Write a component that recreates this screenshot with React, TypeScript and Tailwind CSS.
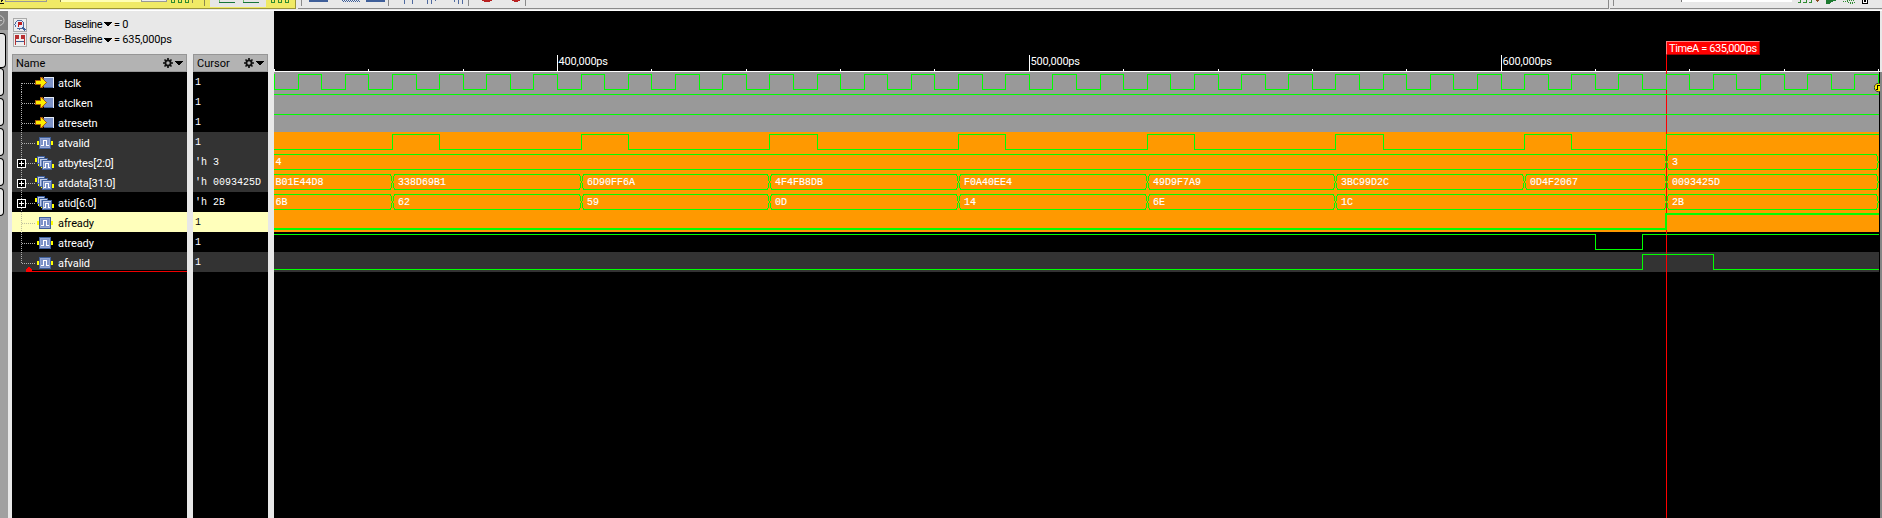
import React from "react";

const START = 274;
const WIDTH = 1605;
const CURSOR_TIME = 635;

/** Pixel column, relative to the wave pane, of a time in ns. */
const px = (t: number) => Math.floor(557.55 + 4.7175 * (t - 400)) - START;

type Kind = "input" | "wire" | "bus";
type BusValue = { from: number; to: number; text: string };
type Signal = {
  name: string;
  value: string;
  kind: Kind;
  row: string;
  wave: string;
  selected?: boolean;
  start?: 0 | 1;
  edges?: number[];
  bus?: BusValue[];
};

const clockEdges = Array.from({ length: 69 }, (_, i) => 340 + i * 5);

const signals: Signal[] = [
  { name: "atclk", value: "1", kind: "input", row: "bg-black", wave: "bg-[#999999]", start: 1, edges: clockEdges },
  { name: "atclken", value: "1", kind: "input", row: "bg-black", wave: "bg-[#999999]", start: 1, edges: [] },
  { name: "atresetn", value: "1", kind: "input", row: "bg-black", wave: "bg-[#999999]", start: 1, edges: [] },
  {
    name: "atvalid", value: "1", kind: "wire", row: "bg-[#333333]", wave: "bg-[#ff9900]", start: 0,
    edges: [365, 375, 405, 415, 445, 455, 485, 495, 525, 535, 565, 575, 605, 615, 635],
  },
  {
    name: "atbytes[2:0]", value: "'h 3", kind: "bus", row: "bg-[#333333]", wave: "bg-[#ff9900]",
    bus: [{ from: 330, to: 635, text: "4" }, { from: 635, to: 680, text: "3" }],
  },
  {
    name: "atdata[31:0]", value: "'h 0093425D", kind: "bus", row: "bg-[#333333]", wave: "bg-[#ff9900]",
    bus: [
      { from: 330, to: 365, text: "B01E44D8" },
      { from: 365, to: 405, text: "338D69B1" },
      { from: 405, to: 445, text: "6D90FF6A" },
      { from: 445, to: 485, text: "4F4FB8DB" },
      { from: 485, to: 525, text: "F0A40EE4" },
      { from: 525, to: 565, text: "49D9F7A9" },
      { from: 565, to: 605, text: "3BC99D2C" },
      { from: 605, to: 635, text: "0D4F2067" },
      { from: 635, to: 680, text: "0093425D" },
    ],
  },
  {
    name: "atid[6:0]", value: "'h 2B", kind: "bus", row: "bg-black", wave: "bg-[#ff9900]",
    bus: [
      { from: 330, to: 365, text: "6B" },
      { from: 365, to: 405, text: "62" },
      { from: 405, to: 445, text: "59" },
      { from: 445, to: 485, text: "0D" },
      { from: 485, to: 525, text: "14" },
      { from: 525, to: 565, text: "6E" },
      { from: 565, to: 635, text: "1C" },
      { from: 635, to: 680, text: "2B" },
    ],
  },
  { name: "afready", value: "1", kind: "wire", row: "bg-[#ffffbb]", wave: "bg-[#ff9900]", selected: true, start: 0, edges: [635] },
  { name: "atready", value: "1", kind: "wire", row: "bg-black", wave: "bg-black", start: 1, edges: [620, 630] },
  { name: "afvalid", value: "1", kind: "wire", row: "bg-[#333333]", wave: "bg-[#333333]", start: 0, edges: [630, 645] },
];

const HIGH = 2.5;
const LOW = 17.5;

function digitalPath(start: 0 | 1, edges: number[]) {
  let level = start;
  let d = `M0 ${level ? HIGH : LOW}`;
  for (const t of edges) {
    const x = px(t) + 0.5;
    level = level ? 0 : 1;
    d += `H${x}V${level ? HIGH : LOW}`;
  }
  return `${d}H${WIDTH}`;
}

function busPath(b: BusValue) {
  const right = px(b.to) + 0.5;
  const open = b.from < 340;
  const left = open ? 0 : px(b.from) + 0.5;
  const l = open ? left : left + 2;
  return (
    `M${l} ${HIGH}H${right - 2}L${right - 1} 5L${right - 0.4} 10L${right - 1} 15L${right - 2} ${LOW}H${l}` +
    (open ? "" : `L${left + 1} 15L${left + 0.4} 10L${left + 1} 5Z`)
  );
}

function Wave({ s }: { s: Signal }) {
  return (
    <div className={`h-5 w-[1605px] ${s.wave}`}>
      <svg width={WIDTH} height="20" className="relative z-10 block" shapeRendering="crispEdges">
        {s.bus ? (
          s.bus.map((b) => (
            <g key={b.from}>
              <path d={busPath(b)} fill="none" stroke="#00ff00" />
              <text
                x={b.from < 340 ? 1.5 : px(b.from) + 6}
                y="13"
                fill="#fff"
                stroke="#fff"
                strokeWidth="0.15"
                className="font-['Liberation_Mono',monospace] text-[10px]"
              >
                {b.text}
              </text>
            </g>
          ))
        ) : (
          <path
            d={digitalPath(s.start ?? 0, s.edges ?? [])}
            transform={s.selected ? "translate(-0.5 -0.5)" : undefined}
            fill="none"
            stroke="#00ff00"
            strokeWidth={s.selected ? 2 : 1}
          />
        )}
      </svg>
    </div>
  );
}

function BlueBox({ x, y, size }: { x: number; y: number; size: number }) {
  return (
    <g>
      <rect x={x} y={y} width={size} height={size} fill="#3f5f9a" />
      <rect x={x + 1} y={y + 1} width={size - 2} height={size - 2} fill="#c3cee9" />
      <rect x={x + 2} y={y + 2} width={size - 3} height={size - 3} fill="#7d93c8" />
    </g>
  );
}

function KindIcon({ kind }: { kind: Kind }) {
  if (kind === "input")
    return (
      <svg width="20" height="14" className="block shrink-0" shapeRendering="crispEdges">
        <rect x="9" y="1" width="10" height="11" fill="#7d93c8" />
        <path d="M9 1.5H18.5V12" fill="none" stroke="#e6ebf7" />
        <path d="M9 11.5H18" stroke="#3f5f9a" />
        <path d="M0.5 4.5H5.5V1.5H7L11.5 6.5L7 11.5H5.5V8.5H0.5Z" fill="#ffee00" stroke="#a85a10" />
      </svg>
    );
  if (kind === "wire")
    return (
      <svg width="20" height="14" className="block shrink-0" shapeRendering="crispEdges">
        <path d="M3 5V9M17 5V9" stroke="#ffff00" strokeWidth="2" />
        <rect x="4" y="1" width="12" height="12" fill="#3f5f9a" />
        <rect x="5.5" y="2.5" width="9" height="9" fill="#7d93c8" stroke="#93a6d4" />
        <path d="M6 9.5H8.5V4.5H11.5V9.5H14" fill="none" stroke="#fff" />
      </svg>
    );
  return (
    <svg width="20" height="14" className="block shrink-0" shapeRendering="crispEdges">
      <path d="M0 2V6M3 5V10M6 8V12M17 8V12" transform="translate(1)" stroke="#ffff00" strokeWidth="2" />
      <BlueBox x={2} y={0} size={8} />
      <BlueBox x={4} y={2} size={9} />
      <BlueBox x={7} y={4} size={10} />
      <path d="M9 11.5H10.5V7.5H13.5V11.5H15" fill="none" stroke="#fff" />
    </svg>
  );
}

function NameRow({ s, first, last }: { s: Signal; first: boolean; last: boolean }) {
  const dots = s.selected ? "#bdbd9c" : "#b0b0b0";
  return (
    <div className={`flex h-5 items-start ${s.row}`}>
      <svg width="23" height="20" className="block shrink-0" shapeRendering="crispEdges">
        <path d={`M9.5 ${first ? 11 : 0}V${last ? 11 : 20}`} stroke={dots} strokeDasharray="1 1" />
        <path d="M10 11.5H23" stroke={dots} strokeDasharray="1 1" />
        {s.kind === "bus" && (
          <g>
            <rect x="5.5" y="7.5" width="8" height="8" fill="#000" stroke="#fff" />
            <path d="M7 11.5H12M9.5 9V14" stroke="#fff" />
          </g>
        )}
      </svg>
      <div className="pt-[4px]">
        <KindIcon kind={s.kind} />
      </div>
      <span
        className={`pt-[3px] pl-[3px] font-[Roboto,sans-serif] text-[11px] leading-[17px] tracking-[-0.1px] whitespace-nowrap ${s.selected ? "text-black" : "text-white"}`}
      >
        {s.name}
      </span>
    </div>
  );
}

function Gear() {
  return (
    <svg width="10" height="10" viewBox="-5 -5 10 10">
      <circle r="2.6" fill="none" stroke="#111" strokeWidth="1.8" />
      <path
        d="M0-5V-3M0 5V3M-5 0H-3M5 0H3M-3.5-3.5L-2-2M3.5 3.5L2 2M-3.5 3.5L-2 2M3.5-3.5L2-2"
        stroke="#111"
        strokeWidth="1.7"
      />
    </svg>
  );
}

function Caret() {
  return (
    <svg width="8" height="5" shapeRendering="crispEdges">
      <path d="M0 0H8L4 4.5Z" fill="#000" />
    </svg>
  );
}

function ColumnHeader({ label }: { label: string }) {
  return (
    <div className="flex h-[18px] items-center border border-[#969696] bg-[#b3b3b3] pr-[3px] pl-[3px]">
      <span className="grow pt-px font-[Roboto,sans-serif] text-[11px] leading-[15px]">{label}</span>
      <Gear />
      <span className="pl-[2px]">
        <Caret />
      </span>
    </div>
  );
}

const greenTeeth = (x: number) =>
  `M${x + 0.5} 0V2.5H${x + 3.5}V0M${x + 7.5} 0V2.5H${x + 10.5}V0M${x + 14.5} 0V2.5H${x + 17.5}V0`;

function Toolbar() {
  return (
    <div className="flex h-[11px] w-full shrink-0 border-b border-white bg-[#e8e8e8]">
      <div className="h-[9px] w-[296px] border-r border-b border-[#9a9438] bg-[#f0ea66]">
        <svg width="295" height="8" className="block" shapeRendering="crispEdges">
          <path d="M0 3.5H4M1 0V2L3 0" stroke="#111" fill="none" />
          <path d="M5 0V1.5H46.5V0" stroke="#999" fill="#f0ea66" />
          <rect x="61" width="80" height="2" fill="#ffffb5" />
          <path d="M60.5 0V2" stroke="#8a8640" />
          <rect x="141" width="26" height="2" fill="#999" />
          <rect x="142" width="24" height="1" fill="#eee" />
          <path d={greenTeeth(171)} stroke="#2f8b30" fill="none" />
          <path d="M192.5 0V2.5M204.5 0V6" stroke="#8c8850" />
          <rect x="210" width="56" height="7" fill="#e6e6e6" />
          <path d="M219 2.5H235M243 2.5H259" stroke="#17743a" />
          <path d="M219.5 0V2M243.5 0V2" stroke="#6fc06f" />
          <path d={greenTeeth(271)} stroke="#2f8b30" fill="none" />
        </svg>
      </div>
      <div className="ml-[2px] h-[9px] w-[1311px] border-r border-b border-[#8a8a8a]">
        <svg width="1310" height="8" className="block" shapeRendering="crispEdges">
          <path d="M3.5 0V5.5M90.5 0V6M170.5 0V6M227.5 0V6" stroke="#8a8a8a" />
          <path d="M11 0H29V1.5H11ZM68 0H86V1.5H68Z" fill="#7d93c8" stroke="#3f5f9a" />
          <path d="M44 0.5H62M45 1.5H62" stroke="#3f5f9a" strokeDasharray="1 1" />
          <path
            d="M106.5 0V4M114.5 0V4M129.5 0V4M133.5 0V4M137.5 0V1M156.5 0V2M160.5 0V4M164.5 0V4"
            stroke="#506a9f"
          />
          <path d="M184 0H194V1H192V2H186V1H184ZM214 0H222V1H220V2H216V1H214Z" fill="#b82020" />
        </svg>
      </div>
      <div className="ml-px h-[9px] grow border-b border-[#8a8a8a]">
        <svg width="272" height="8" className="block" shapeRendering="crispEdges">
          <path d="M3.5 0V5.5" stroke="#8a8a8a" />
          <rect x="72" width="110" height="2" fill="#fff" />
          <path d="M71.5 0V2" stroke="#777" />
          <path d="M187.5 2.5H190.5V0M192.5 2.5H196.5V0M198.5 2.5H201.5V0" stroke="#2f8b30" fill="none" />
          <path d="M205 0H209L207 2Z" fill="#8a4a20" />
          <path d="M216 0H227L222 2L219 4H216Z" fill="#1d7a30" />
          <path d="M233 1.5H239M237 0.5H244M238 2.5H245M240 3.5H244" stroke="#2f8b30" strokeDasharray="1 1" />
          <path d="M252.5 0V3.5H257.5V0" stroke="#000" fill="#fff" />
          <rect x="254" width="2" height="2" fill="#000" />
        </svg>
      </div>
    </div>
  );
}

function SideTabs() {
  return (
    <div className="flex w-2 shrink-0 flex-col overflow-hidden bg-[#a0a0a0]">
      <div className="h-[19px] bg-[#808080]">
        <svg width="8" height="19" className="block">
          <circle cx="-1" cy="9.5" r="5" fill="none" stroke="#c8c8c8" />
          <path d="M-3 9.5H2" stroke="#c8c8c8" />
        </svg>
      </div>
      <div className="mt-[3px] h-[35px] w-[6px] rounded-r-[4px] border border-l-0 border-black bg-[#e8e8e8]" />
      <div className="h-[28px] w-[4px] rounded-r-[4px] border border-l-0 border-black bg-[#e8e8e8]" />
      <div className="mt-[2px] h-[28px] w-[4px] rounded-r-[4px] border border-l-0 border-black bg-[#e8e8e8]" />
      <div className="mt-[2px] h-[28px] w-[4px] rounded-r-[4px] border border-l-0 border-black bg-[#e8e8e8]" />
      <div className="mt-[2px] h-[28px] w-[4px] rounded-r-[4px] border border-l-0 border-black bg-[#e8e8e8]" />
      <div className="mt-[2px] h-[28px] w-[4px] rounded-r-[4px] border border-l-0 border-black bg-[#e8e8e8]" />
    </div>
  );
}

function Readouts() {
  return (
    <div className="flex h-[43px] flex-col gap-px pt-[6px] font-[Roboto,sans-serif] text-[11px] leading-[14px]">
      <div className="flex h-[15px] items-center pl-px">
        <svg width="14" height="14" className="shrink-0" shapeRendering="crispEdges">
          <rect x="0.5" y="0.5" width="13" height="13" fill="#eee" stroke="#aaa" />
          <circle cx="6.5" cy="6.5" r="4.5" fill="#e7ebf8" stroke="#506a9f" />
          <path d="M9.5 9.5L12.5 12.5" stroke="#3f5f9a" strokeWidth="2" />
          <path d="M5 4H9V7H6V9H5Z" fill="#c02020" />
        </svg>
        <span className="w-[75px] text-right tracking-[-0.5px]">Baseline</span>
        <span className="flex pr-[2px] pl-[2px]">
          <Caret />
        </span>
        <span className="tracking-[-0.3px]">= 0</span>
      </div>
      <div className="flex h-[14px] items-center pl-px">
        <svg width="14" height="14" className="shrink-0" shapeRendering="crispEdges">
          <rect x="0.5" y="0.5" width="13" height="13" fill="#eee" stroke="#aaa" />
          <path d="M2 2H6V6H3V12H2ZM8 2H12V12H11V6H8Z" fill="#b83030" />
          <path d="M3 8.5H11" stroke="#405a90" />
        </svg>
        <span className="w-[75px] text-right tracking-[-0.5px] whitespace-nowrap">
          <span className="tracking-[-0.1px]">Cursor-</span>Baseline
        </span>
        <span className="flex pr-[2px] pl-[2px]">
          <Caret />
        </span>
        <span className="tracking-[-0.2px]">= 635,000ps</span>
      </div>
    </div>
  );
}

function Ruler() {
  const ticks = Array.from({ length: 18 }, (_, i) => 340 + i * 20);
  return (
    <svg width="1606" height="61" className="block bg-black" shapeRendering="crispEdges">
      <path d="M0 60.5H1606" stroke="#fff" />
      {ticks.map((t) => (
        <path key={t} d={`M${px(t) + 0.5} ${t % 100 === 0 ? 44 : 58}V60`} stroke="#fff" />
      ))}
      {[400, 500, 600].map((t) => (
        <text
          key={t}
          x={px(t) + 1.5}
          y="54"
          fill="#fff"
          className="font-[Roboto,sans-serif] text-[11px] tracking-[-0.2px]"
        >
          {`${t},000ps`}
        </text>
      ))}
    </svg>
  );
}

export default function App() {
  return (
    <div className="flex h-[518px] w-[1882px] flex-col overflow-hidden bg-[#e8e8e8] text-black">
      <Toolbar />
      <div className="flex min-h-0 grow">
        <SideTabs />
        <div className="flex w-[266px] shrink-0 flex-col pr-[6px] pl-[4px]">
          <Readouts />
          <div className="flex grow gap-[6px]">
            <div className="relative flex w-[175px] flex-col bg-black">
              <ColumnHeader label="Name" />
              {signals.map((s, i) => (
                <NameRow key={s.name} s={s} first={i === 0} last={i === signals.length - 1} />
              ))}
              <svg width="175" height="6" className="absolute top-[213px] left-0" shapeRendering="crispEdges">
                <path d="M20 3.5H175" stroke="#000" />
                <path d="M15 4.5H175" stroke="#ee0000" />
                <path d="M16 0H18V1H19V2H20V5H14V2H15V1H16Z" fill="#ff0000" />
              </svg>
            </div>
            <div className="flex w-[75px] flex-col bg-black">
              <ColumnHeader label="Cursor" />
              {signals.map((s) => (
                <div
                  key={s.name}
                  className={`h-5 overflow-hidden pl-[2px] font-['Liberation_Mono',monospace] text-[10px] leading-[21px] whitespace-pre ${s.row} ${s.selected ? "text-black" : "text-white"}`}
                >
                  {s.value}
                </div>
              ))}
            </div>
          </div>
        </div>
        <div className="relative flex w-[1606px] shrink-0 flex-col overflow-hidden bg-black">
          <Ruler />
          {signals.map((s) => (
            <Wave key={s.name} s={s} />
          ))}
          <div className="absolute top-[30px] bottom-0 w-px bg-[#ff0000]" style={{ left: px(CURSOR_TIME) }} />
          <div
            className="absolute top-[30px] h-[14px] w-[94px] border border-t-[#ff8080] border-r-[#a00000] border-b-[#a00000] border-l-[#ff8080] bg-[#ff0000] pl-[2px] font-[Roboto,sans-serif] text-[11px] leading-[13px] tracking-[-0.4px] whitespace-nowrap text-white"
            style={{ left: px(CURSOR_TIME) }}
          >
            TimeA = 635,000ps
          </div>
          <svg width="6" height="10" className="absolute top-[72px] right-0 z-20">
            <circle cx="4.5" cy="4.5" r="4.2" fill="#ffee00" stroke="#333" />
            <path d="M1.5 6.5H3.5V2.5H6" stroke="#000" fill="none" shapeRendering="crispEdges" />
          </svg>
        </div>
        <div className="flex w-[2px] flex-col bg-[#858585]">
          <div className="h-[61px] bg-[#e8e8e8]" />
        </div>
      </div>
    </div>
  );
}
